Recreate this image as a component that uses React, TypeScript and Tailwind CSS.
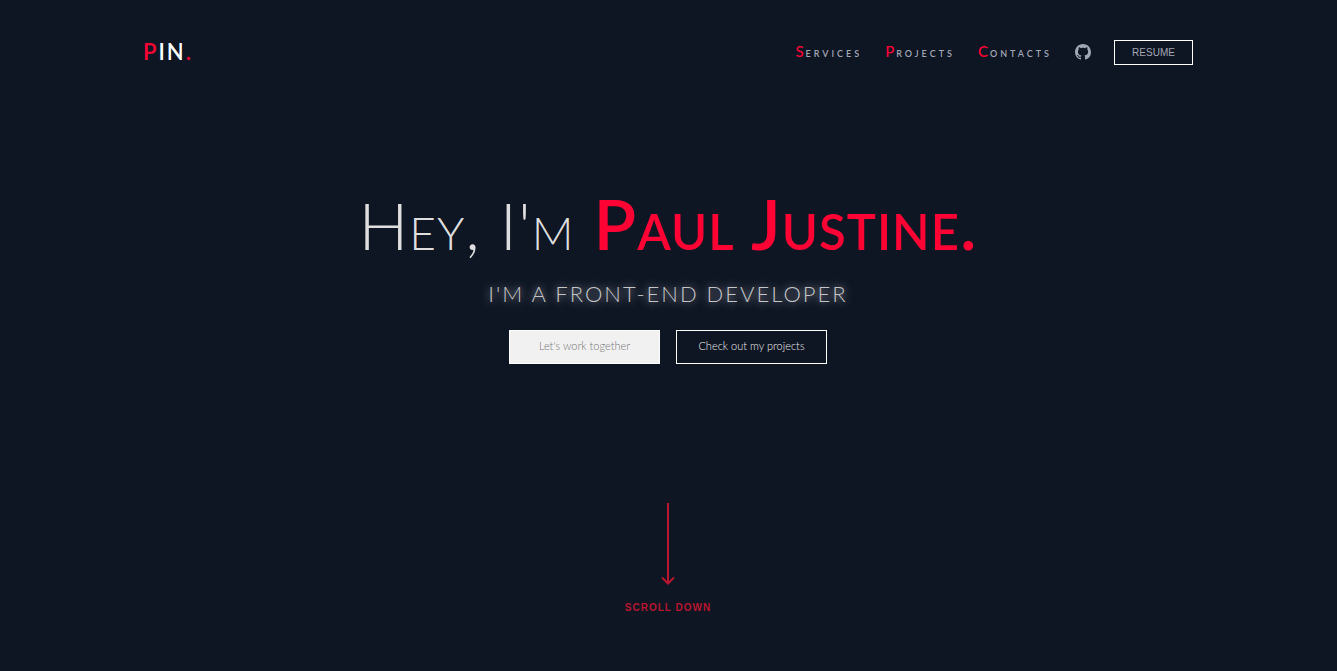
import React from "react";

const links = ["Services", "Projects", "Contacts"];

function GithubIcon() {
  return (
    <svg viewBox="0 0 16 16" className="size-4 fill-current" aria-hidden="true">
      <path d="M8 0C3.58 0 0 3.58 0 8c0 3.54 2.29 6.53 5.47 7.59.4.07.55-.17.55-.38 0-.19-.01-.82-.01-1.49-2.01.37-2.53-.49-2.69-.94-.09-.23-.48-.94-.82-1.13-.28-.15-.68-.52-.01-.53.63-.01 1.08.58 1.23.82.72 1.21 1.87.87 2.33.66.07-.52.28-.87.51-1.07-1.78-.2-3.64-.89-3.64-3.95 0-.87.31-1.59.82-2.15-.08-.2-.36-1.02.08-2.12 0 0 .67-.21 2.2.82.64-.18 1.32-.27 2-.27s1.36.09 2 .27c1.53-1.04 2.2-.82 2.2-.82.44 1.1.16 1.92.08 2.12.51.56.82 1.27.82 2.15 0 3.07-1.87 3.75-3.65 3.95.29.25.54.73.54 1.48 0 1.07-.01 1.93-.01 2.2 0 .21.15.46.55.38A8.01 8.01 0 0 0 16 8c0-4.42-3.58-8-8-8z" />
    </svg>
  );
}

function Header() {
  return (
    <header className="flex items-center justify-between">
      <a href="#" className="pb-0.5 text-[22px] leading-5 font-semibold tracking-[2px] text-white">
        <span className="text-[#ff0335]">P</span>IN<span className="text-[#ff0335]">.</span>
      </a>
      <nav className="flex items-center gap-[23px] text-[#a2a7b5]">
        {links.map((link) => (
          <a
            key={link}
            href={`#${link.toLowerCase()}`}
            className="pb-0.5 text-[13px] leading-5 font-semibold tracking-[3px] [font-variant:small-caps]"
          >
            <span className="text-[15px] font-medium tracking-[2px] text-[#ff0335]">{link[0]}</span>
            {link.slice(1)}
          </a>
        ))}
        <a href="https://github.com" aria-label="GitHub" className="pb-0.5">
          <GithubIcon />
        </a>
        <button
          type="button"
          className="h-[25px] w-[79px] border border-white font-['Liberation_Sans',sans-serif] text-[10px]"
        >
          RESUME
        </button>
      </nav>
    </header>
  );
}

function Hero() {
  return (
    <section className="flex flex-col items-center pt-28 text-center">
      <h1 className="text-[66px] leading-[92px] font-light tracking-[1px] whitespace-nowrap text-[#dedede] [font-variant:small-caps]">
        Hey, I'm{" "}
        <span className="text-[70px] font-semibold text-[#ff0335]">Paul Justine.</span>
      </h1>
      <p className="mt-[5px] text-[22px] leading-9 font-light tracking-[2px] text-[#c4c5c8] uppercase [text-shadow:0_0_8px_#ffffffcc]">
        I'm a front-end developer
      </p>
      <div className="mt-[18px] flex gap-4 text-[11px] font-light">
        <button type="button" className="h-[34px] w-[151px] border border-white bg-[#f1f1f1] pb-0.5 text-[#757575]">
          Let's work together
        </button>
        <button type="button" className="h-[34px] w-[151px] border border-white pb-0.5 text-[#ededed]">
          Check out my projects
        </button>
      </div>
    </section>
  );
}

function ScrollDown() {
  return (
    <a
      href="#services"
      className="mt-auto flex flex-col items-center gap-[17px] self-center font-['Liberation_Sans',sans-serif] text-[10px] leading-3 font-bold tracking-[1px] text-[#b9162f]"
    >
      <svg viewBox="0 0 14 82" className="h-[82px] w-[14px]" fill="none" stroke="currentColor" strokeWidth="2" aria-hidden="true">
        <path d="M7 0V81M1 74.5L7 80.5L13 74.5" />
      </svg>
      SCROLL DOWN
    </a>
  );
}

export default function App() {
  return (
    <main className="flex min-h-screen flex-col bg-[#0e1523] pt-10 pr-36 pb-[57px] pl-[143px] font-[Lato,sans-serif]">
      <Header />
      <Hero />
      <ScrollDown />
    </main>
  );
}
